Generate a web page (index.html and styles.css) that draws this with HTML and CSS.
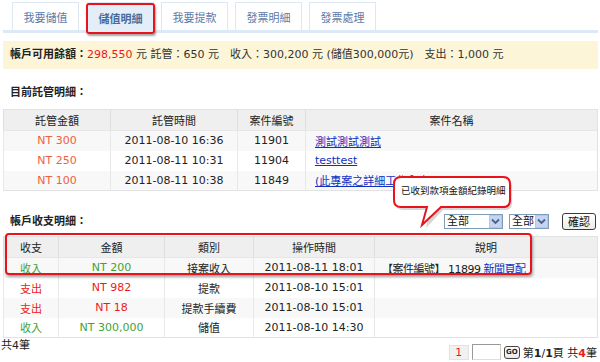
FILE: index.html
```html
<!DOCTYPE html>
<html lang="zh-Hant">
<head>
<meta charset="utf-8">
<title>儲值明細</title>
<link rel="stylesheet" href="styles.css">
</head>
<body>
<div class="tabs">
  <div class="tab">我要儲值</div>
  <div class="tab active">儲值明細</div>
  <div class="tab">我要提款</div>
  <div class="tab">發票明細</div>
  <div class="tab">發票處理</div>
</div>
<div class="tabbar"></div>

<div class="balance">
  <b>帳戶可用餘額：</b><span class="red">298,550</span> 元 託管：650 元　收入：300,200 元 (儲值300,000元)　支出：1,000 元
</div>

<div class="title t1">目前託管明細：</div>
<table class="grid g1">
  <tr><th class="c1">託管金額</th><th class="c2">託管時間</th><th class="c3">案件編號</th><th>案件名稱</th></tr>
  <tr class="odd"><td class="amt">NT 300</td><td>2011-08-10 16:36</td><td>11901</td><td class="name"><a href="#">測試測試測試</a></td></tr>
  <tr><td class="amt">NT 250</td><td>2011-08-11 10:31</td><td>11904</td><td class="name"><a href="#">testtest</a></td></tr>
  <tr class="odd"><td class="amt">NT 100</td><td>2011-08-11 10:38</td><td>11849</td><td class="name"><a href="#">(此專案之詳細工作內容)</a></td></tr>
</table>

<div class="filter">
  <div class="title">帳戶收支明細：</div>
  <div class="controls">
    <span class="select wide"><span class="val">全部</span><span class="arrow"><svg width="9" height="7" viewBox="0 0 9 7"><path d="M1 1.5 L4.5 5 L8 1.5" fill="none" stroke="#4d6185" stroke-width="1.8"/></svg></span></span>
    <span class="select"><span class="val">全部</span><span class="arrow"><svg width="9" height="7" viewBox="0 0 9 7"><path d="M1 1.5 L4.5 5 L8 1.5" fill="none" stroke="#4d6185" stroke-width="1.8"/></svg></span></span>
    <span class="btn">確認</span>
  </div>
</div>

<div class="wrap2">
  <table class="grid g2">
    <tr><th class="d1">收支</th><th class="d2">金額</th><th class="d3">類別</th><th class="d4">操作時間</th><th>說明</th></tr>
    <tr class="odd"><td class="in">收入</td><td class="in">NT 200</td><td>接案收入</td><td>2011-08-11 18:01</td><td class="desc">【案件編號】 11899 <a href="#">新聞頁配</a></td></tr>
    <tr><td class="out">支出</td><td class="out">NT 982</td><td>提款</td><td>2011-08-10 15:01</td><td></td></tr>
    <tr class="odd"><td class="out">支出</td><td class="out">NT 18</td><td>提款手續費</td><td>2011-08-10 15:01</td><td></td></tr>
    <tr><td class="in">收入</td><td class="in">NT 300,000</td><td>儲值</td><td>2011-08-10 14:30</td><td></td></tr>
  </table>
  <div class="hilite"></div>
</div>

<div class="footer">
  <div class="count">共4筆</div>
  <div class="pager">
    <span class="page">1</span>
    <span class="input"></span>
    <span class="go">GO</span>
    <span class="info">第<b>1</b>/<b>1</b>頁 共<b class="red">4</b>筆</span>
  </div>
</div>

<div class="tip">
  <svg class="bubble" width="124" height="56" viewBox="0 0 124 56">
    <path d="M11 4 H113 Q120 4 120 11 V27 Q120 34 113 34 H51 L34 52 L37 34 H11 Q4 34 4 27 V11 Q4 4 11 4 Z" fill="#bbb" transform="translate(2,2)" opacity="0.6"/>
    <path d="M11 3 H113 Q120 3 120 10 V26 Q120 33 113 33 H51 L32 51 L37 33 H11 Q4 33 4 26 V10 Q4 3 11 3 Z" fill="#fff" stroke="#e8141c" stroke-width="2"/>
  </svg>
  <span class="tiptext">已收到款項金額紀錄明細</span>
</div>
</body>
</html>
```
FILE: styles.css
```css
* { box-sizing: border-box; }
body {
  margin: 0;
  padding: 0 2px 0 3px;
  width: 600px;
  height: 362px;
  overflow: hidden;
  position: relative;
  font-family: "DejaVu Sans", "Noto Sans CJK TC", sans-serif;
  font-size: 11px;
  color: #222;
  background: #fff;
}
.tabs {
  display: flex;
  gap: 7px;
  padding: 2px 0 0 9px;
  height: 30px;
}
.tab {
  width: 67px;
  height: 28px;
  border: 1px solid #dde8f3;
  border-bottom: none;
  background: #fff;
  color: #5a7aa8;
  font-size: 11px;
  display: flex;
  align-items: center;
  justify-content: center;
  position: relative;
}
.tab.active {
  background: #e4eef8;
  color: #4a6a98;
  font-weight: bold;
  height: 30px;
  margin-left: 1px;
}
.tab.active::after {
  content: "";
  position: absolute;
  left: -2px; right: -2px; top: 0; bottom: -2px;
  border: 2px solid #e8141c;
  border-radius: 3px;
  box-shadow: 1px 2px 2px rgba(0,0,0,0.35);
}
.tabbar {
  height: 3px;
  background: #dce9f6;
}
.balance {
  margin-top: 8px;
  height: 28px;
  line-height: 28px;
  background: #fdf5d7;
  padding-left: 7px;
  color: #333;
}
.balance b { color: #222; }
.red { color: #f01818; }
.title {
  font-weight: bold;
  color: #222;
  line-height: 16px;
  padding-left: 7px;
}
.t1 { margin-top: 16px; margin-bottom: 8px; }
.grid {
  width: 595px;
  border-collapse: collapse;
  border: 1px solid #e2e2e2;
  table-layout: fixed;
}
.grid th {
  background: #efefef;
  font-weight: normal;
  color: #222;
  height: 21px;
  border-left: 1px solid #dedede;
  border-bottom: 1px solid #e6e6e6;
  padding: 0;
  text-align: center;
}
.grid td {
  height: 20px;
  padding: 0;
  text-align: center;
  border-left: 1px solid #e8e8e8;
  color: #222;
}
.grid tr.odd td { background: #f8f8f8; }
.c1 { width: 107px; }
.c2 { width: 127px; }
.c3 { width: 68px; }
.d1 { width: 55px; }
.d2 { width: 106px; }
.d3 { width: 89px; }
.d4 { width: 121px; }
.amt { color: #f0603c !important; }
.grid td.name { text-align: left; padding-left: 9px; }
a { color: #1030c0; text-decoration: underline; }
.filter {
  display: flex;
  justify-content: space-between;
  align-items: center;
  margin-top: 21px;
  height: 18px;
}
.filter .title { padding-top: 1px; }
.controls {
  display: flex;
  align-items: center;
  gap: 6px;
  padding-right: 2px;
}
.select {
  display: flex;
  height: 15px;
  width: 40px;
  border: 1px solid #7f9db9;
  background: #fff;
  align-items: stretch;
}
.select.wide { width: 59px; }
.select .val {
  flex: 1;
  line-height: 13px;
  padding-left: 2px;
  color: #111;
}
.select .arrow {
  width: 13px;
  background: #c4d4f2;
  border: 1px solid #b3c7ec;
  display: flex;
  align-items: center;
  justify-content: center;
}
.btn {
  margin-left: 7px;
  width: 34px;
  height: 17px;
  border: 1px solid #3b3b3b;
  border-radius: 3px;
  background: linear-gradient(#fff, #ecebe4);
  display: flex;
  align-items: center;
  justify-content: center;
  font-size: 11px;
  color: #111;
}
.wrap2 {
  position: relative;
  margin-top: 6px;
}
.g2 td.in { color: #3ea33a; }
.g2 td.out { color: #f01818; }
.g2 td.desc { text-align: left; padding-left: 7px; white-space: nowrap; letter-spacing: -0.5px; }
.hilite {
  position: absolute;
  left: 2px;
  top: -3px;
  width: 527px;
  height: 42px;
  border: 2px solid #e8141c;
  border-radius: 4px;
  box-shadow: 1px 2px 3px rgba(0,0,0,0.35);
}
.footer {
  display: flex;
  justify-content: space-between;
  align-items: flex-start;
}
.count {
  line-height: 14px;
  margin-left: -2px;
  padding-top: 1px;
}
.pager {
  display: flex;
  align-items: center;
  gap: 3px;
  margin-top: 6px;
  padding-right: 1px;
}
.page {
  width: 20px;
  height: 15px;
  background: #f1f1f1;
  border: 1px solid #e2e2e2;
  color: #f01818;
  text-align: center;
  line-height: 13px;
}
.input {
  width: 29px;
  height: 16px;
  border: 1px solid #999;
  border-right-color: #ccc;
  border-bottom-color: #ddd;
  background: #fff;
}
.go {
  width: 16px;
  height: 13px;
  border: 1px solid #444;
  border-radius: 3px;
  font-size: 7px;
  font-weight: bold;
  display: flex;
  align-items: center;
  justify-content: center;
  background: linear-gradient(#fff, #e8e8e8);
}
.info { color: #222; }
.info b { font-weight: bold; }
.tip {
  position: absolute;
  left: 390px;
  top: 174px;
  width: 124px;
  height: 56px;
}
.bubble { position: absolute; left: 0; top: 0; }
.tiptext {
  position: absolute;
  left: 11px;
  top: 10px;
  font-size: 9.5px;
  line-height: 14px;
  color: #111;
  white-space: nowrap;
}
```
